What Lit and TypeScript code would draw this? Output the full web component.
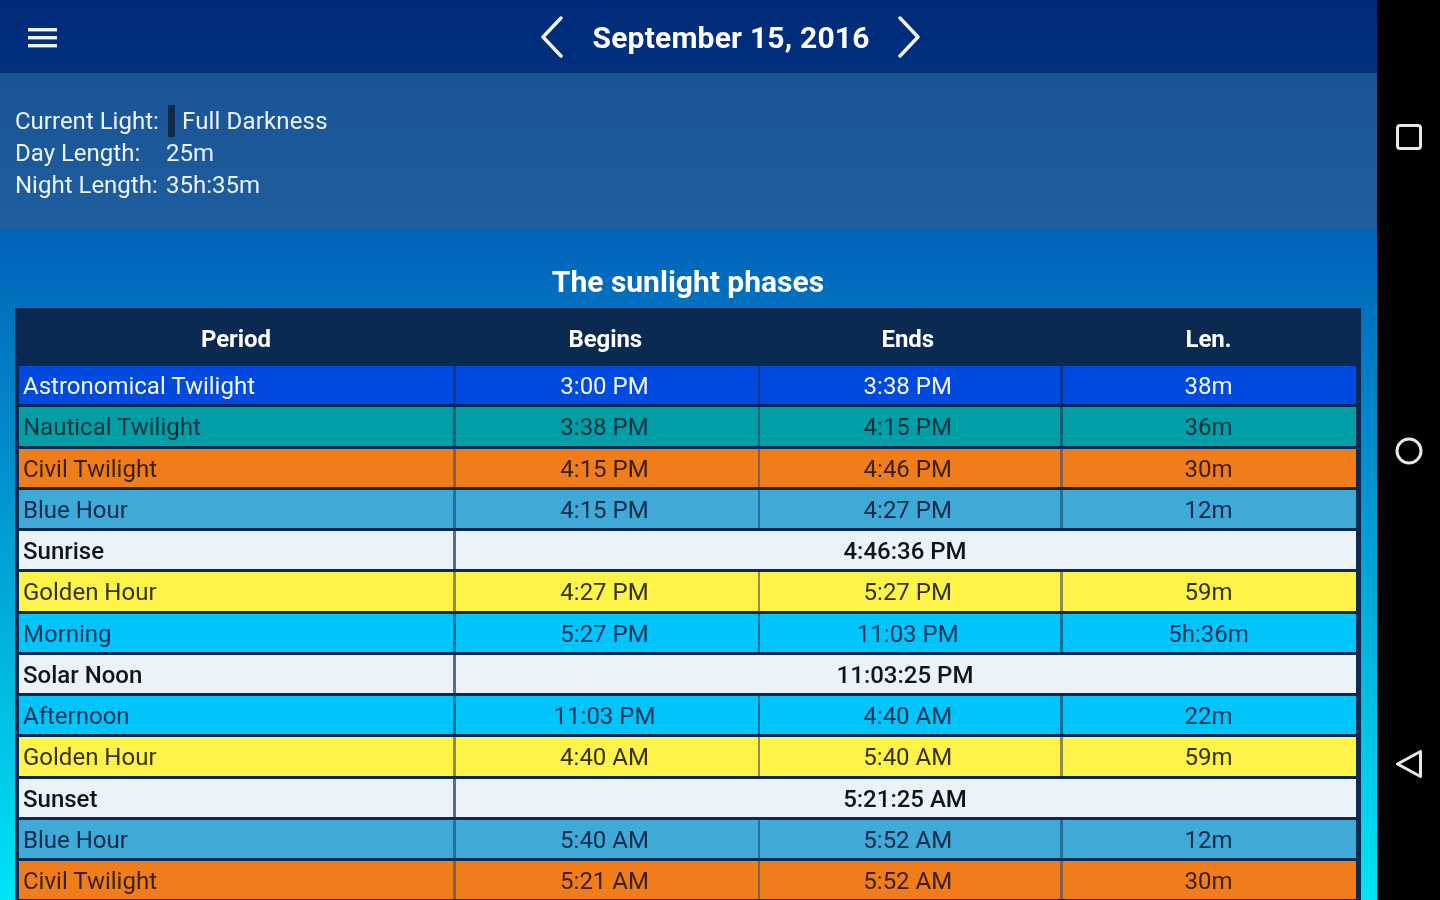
import { LitElement, html, css, svg } from "lit";
import { customElement } from "lit/decorators.js";

type Row = { kind: string; name: string; begins?: string; ends?: string; len?: string; at?: string };

const rows: Row[] = [
  { kind: "astro", name: "Astronomical Twilight", begins: "3:00 PM", ends: "3:38 PM", len: "38m" },
  { kind: "naut", name: "Nautical Twilight", begins: "3:38 PM", ends: "4:15 PM", len: "36m" },
  { kind: "civil", name: "Civil Twilight", begins: "4:15 PM", ends: "4:46 PM", len: "30m" },
  { kind: "blue", name: "Blue Hour", begins: "4:15 PM", ends: "4:27 PM", len: "12m" },
  { kind: "event", name: "Sunrise", at: "4:46:36 PM" },
  { kind: "gold", name: "Golden Hour", begins: "4:27 PM", ends: "5:27 PM", len: "59m" },
  { kind: "day", name: "Morning", begins: "5:27 PM", ends: "11:03 PM", len: "5h:36m" },
  { kind: "event", name: "Solar Noon", at: "11:03:25 PM" },
  { kind: "day", name: "Afternoon", begins: "11:03 PM", ends: "4:40 AM", len: "22m" },
  { kind: "gold", name: "Golden Hour", begins: "4:40 AM", ends: "5:40 AM", len: "59m" },
  { kind: "event", name: "Sunset", at: "5:21:25 AM" },
  { kind: "blue", name: "Blue Hour", begins: "5:40 AM", ends: "5:52 AM", len: "12m" },
  { kind: "civil", name: "Civil Twilight", begins: "5:21 AM", ends: "5:52 AM", len: "30m" },
];

@customElement("app-root")
export class AppRoot extends LitElement {
  static styles = css`
    :host {
      display: flex;
      width: 1440px;
      height: 900px;
      overflow: hidden;
      font-family: Roboto, "Liberation Sans", sans-serif;
      color: #fff;
      background: #000;
    }
    .main {
      width: 1377px;
      display: flex;
      flex-direction: column;
      flex: none;
    }
    .nav {
      width: 63px;
      display: flex;
      flex-direction: column;
      align-items: center;
      padding-top: 122px;
      gap: 284px;
      box-sizing: border-box;
      filter: blur(0.6px);
    }
    .nav svg { display: block; width: 28px; height: 30px; flex: none; }
    .top {
      height: 73px;
      flex: none;
      box-sizing: border-box;
      padding-left: 83px;
      background: linear-gradient(#002a78, #01317f);
      display: flex;
      align-items: center;
      justify-content: center;
      position: relative;
    }
    .menu { position: absolute; left: 28px; top: 27px; width: 30px; height: 21px; filter: blur(0.5px); }
    .date {
      font-size: 30px;
      font-weight: 700;
      margin: 0 27px 0 29px;
      padding-top: 2px;
      width: 277px;
      text-align: center;
      letter-spacing: 0.2px;
      white-space: nowrap;
      filter: blur(0.6px);
    }
    .chev { width: 24px; height: 42px; display: block; filter: blur(0.5px); }
    .info {
      height: 157px;
      flex: none;
      box-sizing: border-box;
      padding-top: 32px;
      padding-left: 15px;
      background: linear-gradient(#1a5496, #1e5e9e);
      font-size: 24px;
      line-height: 32px;
    }
    .line { display: flex; height: 32px; white-space: nowrap; color: #eef3f9; }
    .line span { filter: blur(0.6px); }
    .k { width: 151px; flex: none; }
    .swatch { width: 7px; height: 32px; background: #0e2a42; margin-left: 2px; margin-right: 7px; }
    .fd { letter-spacing: 0.15px; }
    .body {
      flex: 1;
      min-height: 0;
      overflow: hidden;
      background: linear-gradient(#0062b8, #00e4f6);
      padding: 33px 16px 0 15px;
      display: flex;
      flex-direction: column;
    }
    h1 {
      margin: 0;
      height: 45px;
      font-size: 30px;
      line-height: 38px;
      font-weight: 700;
      text-align: center;
      flex: none;
      filter: blur(0.6px);
    }
    .table {
      flex: none;
      background: #0b2a52;
      padding: 0 5px 0 4px;
    }
    .head, .row {
      display: grid;
      grid-template-columns: 434px 304.5px 302.5px 296px;
    }
    .head {
      height: 58px;
      box-sizing: border-box;
      padding-top: 3px;
      align-items: center;
      font-size: 24px;
      font-weight: 700;
      text-align: center;
      letter-spacing: -0.1px;
    }
    .head .c2 { padding-right: 3px; }
    .row {
      grid-template-rows: 38.25px;
      margin-bottom: 3px;
      font-size: 24px;
      line-height: 40px;
      text-align: center;
    }
    .cell { filter: blur(0.6px); white-space: nowrap; }
    .row > div { background: var(--bg); color: var(--fg); height: 38.25px; overflow: hidden; }
    .name { box-sizing: border-box; padding-left: 4px; text-align: left; }
    .head .name { padding-left: 0; text-align: center; }
    .c2, .c3, .c4, .wide { box-sizing: border-box; border-left: 3px solid var(--sep, transparent); }
    .c2 { padding-right: 4.5px; }
    .c3 { padding-right: 4px; border-left-width: 2.5px; }
    .c4 { padding-right: 2px; }
    .wide { grid-column: 2 / 5; font-weight: 500; padding-right: 2px; }
    .event .name { font-weight: 500; }
    .astro { --bg: #004ae0; --fg: #f4f8ff; --sep: #0b348f; }
    .naut { --bg: #009ea6; --fg: #02323e; --sep: #0a5f78; }
    .civil { --bg: #f07d1a; --fg: #3a2006; --sep: #85604c; }
    .blue { --bg: #3faad8; --fg: #052a4a; --sep: #27709c; }
    .event { --bg: #ebf2f9; --fg: #10151c; --sep: #586f8c; }
    .gold { --bg: #fff34a; --fg: #333208; --sep: #8f8c50; }
    .day { --bg: #00c5fb; --fg: #03345a; --sep: #0d6f98; }
  `;

  private chevron(d: string) {
    return html`<svg class="chev" viewBox="0 0 24 42" fill="none" stroke="#f4f7fc" stroke-width="3.4" stroke-linecap="round" stroke-linejoin="round">${svg`<path d=${d}></path>`}</svg>`;
  }

  render() {
    return html`
      <div class="main">
        <div class="top">
          <svg class="menu" viewBox="0 0 30 21" fill="#eef0fa">
            <rect y="1" width="29" height="3.4"></rect>
            <rect y="9" width="29" height="3.4"></rect>
            <rect y="17" width="29" height="3.4"></rect>
          </svg>
          ${this.chevron("M21 2 L3 21 L21 40")}
          <div class="date">September 15, 2016</div>
          ${this.chevron("M3 2 L21 21 L3 40")}
        </div>
        <div class="info">
          <div class="line"><span class="k">Current Light:</span><span class="swatch"></span><span class="fd">Full Darkness</span></div>
          <div class="line"><span class="k">Day Length:</span><span>25m</span></div>
          <div class="line"><span class="k">Night Length:</span><span>35h:35m</span></div>
        </div>
        <div class="body">
          <h1>The sunlight phases</h1>
          <div class="table">
            <div class="head">
              <div class="name"><div class="cell">Period</div></div>
              <div class="c2"><div class="cell">Begins</div></div>
              <div class="c3"><div class="cell">Ends</div></div>
              <div class="c4"><div class="cell">Len.</div></div>
            </div>
            ${rows.map(
              (r) => html`<div class="row ${r.kind}">
                <div class="name"><div class="cell">${r.name}</div></div>
                ${r.at
                  ? html`<div class="wide"><div class="cell">${r.at}</div></div>`
                  : html`<div class="c2"><div class="cell">${r.begins}</div></div><div class="c3"><div class="cell">${r.ends}</div></div><div class="c4"><div class="cell">${r.len}</div></div>`}
              </div>`
            )}
          </div>
        </div>
      </div>
      <div class="nav">
        <svg viewBox="0 0 28 30" fill="none" stroke="#e8e8e8" stroke-width="3"><rect x="2.5" y="3.5" width="23" height="23" rx="2.5"></rect></svg>
        <svg viewBox="0 0 28 30" fill="none" stroke="#e8e8e8" stroke-width="3"><circle cx="14" cy="15" r="12"></circle></svg>
        <svg viewBox="0 0 28 30" fill="none" stroke="#e8e8e8" stroke-width="3" stroke-linejoin="round"><path d="M2.5 14 L25.5 1.5 L25.5 26.5 Z"></path></svg>
      </div>
    `;
  }
}
